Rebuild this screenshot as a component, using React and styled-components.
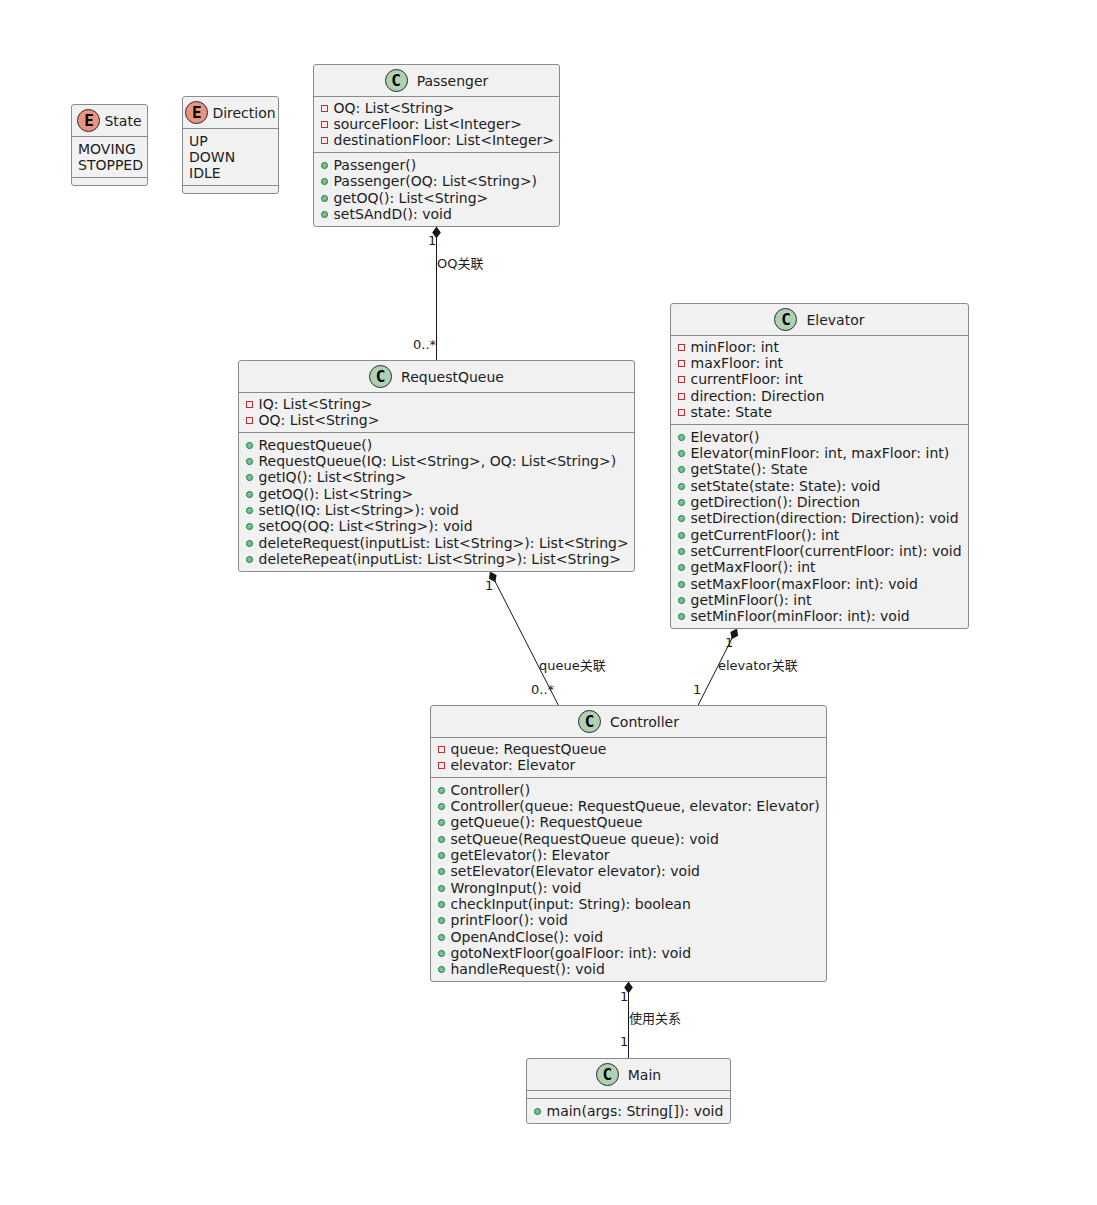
import React from 'react'
import styled, { createGlobalStyle } from 'styled-components'

const classes = [
  { name: 'State', kind: 'E', x: 71, y: 104, w: 77, gap: 4, attrs: [], plain: ['MOVING', 'STOPPED'], methods: [] },
  { name: 'Direction', kind: 'E', x: 182, y: 96, w: 97, gap: 4, attrs: [], plain: ['UP', 'DOWN', 'IDLE'], methods: [] },
  {
    name: 'Passenger', kind: 'C', x: 313, y: 64, w: 247,
    attrs: ['OQ: List<String>', 'sourceFloor: List<Integer>', 'destinationFloor: List<Integer>'],
    methods: ['Passenger()', 'Passenger(OQ: List<String>)', 'getOQ(): List<String>', 'setSAndD(): void'],
  },
  {
    name: 'RequestQueue', kind: 'C', x: 238, y: 360, w: 397,
    attrs: ['IQ: List<String>', 'OQ: List<String>'],
    methods: [
      'RequestQueue()',
      'RequestQueue(IQ: List<String>, OQ: List<String>)',
      'getIQ(): List<String>',
      'getOQ(): List<String>',
      'setIQ(IQ: List<String>): void',
      'setOQ(OQ: List<String>): void',
      'deleteRequest(inputList: List<String>): List<String>',
      'deleteRepeat(inputList: List<String>): List<String>',
    ],
  },
  {
    name: 'Elevator', kind: 'C', x: 670, y: 303, w: 299,
    attrs: ['minFloor: int', 'maxFloor: int', 'currentFloor: int', 'direction: Direction', 'state: State'],
    methods: [
      'Elevator()',
      'Elevator(minFloor: int, maxFloor: int)',
      'getState(): State',
      'setState(state: State): void',
      'getDirection(): Direction',
      'setDirection(direction: Direction): void',
      'getCurrentFloor(): int',
      'setCurrentFloor(currentFloor: int): void',
      'getMaxFloor(): int',
      'setMaxFloor(maxFloor: int): void',
      'getMinFloor(): int',
      'setMinFloor(minFloor: int): void',
    ],
  },
  {
    name: 'Controller', kind: 'C', x: 430, y: 705, w: 397,
    attrs: ['queue: RequestQueue', 'elevator: Elevator'],
    methods: [
      'Controller()',
      'Controller(queue: RequestQueue, elevator: Elevator)',
      'getQueue(): RequestQueue',
      'setQueue(RequestQueue queue): void',
      'getElevator(): Elevator',
      'setElevator(Elevator elevator): void',
      'WrongInput(): void',
      'checkInput(input: String): boolean',
      'printFloor(): void',
      'OpenAndClose(): void',
      'gotoNextFloor(goalFloor: int): void',
      'handleRequest(): void',
    ],
  },
  { name: 'Main', kind: 'C', x: 526, y: 1058, w: 205, attrs: [], methods: ['main(args: String[]): void'] },
]

const edges = [
  { from: [436.5, 226.5], to: [436.5, 360.5] },
  { from: [490, 571.5], to: [558.5, 705.5] },
  { from: [737, 628.5], to: [698, 705.5] },
  { from: [628.5, 981.5], to: [628.5, 1058.5] },
]

const labels = [
  { text: '1', x: 428, y: 233 },
  { text: 'OQ关联', x: 437, y: 256 },
  { text: '0..*', x: 413, y: 337 },
  { text: '1', x: 485, y: 578 },
  { text: 'queue关联', x: 539, y: 658 },
  { text: '0..*', x: 531, y: 682 },
  { text: '1', x: 725, y: 635 },
  { text: 'elevator关联', x: 718, y: 658 },
  { text: '1', x: 693, y: 682 },
  { text: '1', x: 620, y: 989 },
  { text: '使用关系', x: 629, y: 1011 },
  { text: '1', x: 620, y: 1034 },
]

const diamondPoints = ([x1, y1], [x2, y2]) => {
  const len = Math.hypot(x2 - x1, y2 - y1)
  const ux = (x2 - x1) / len
  const uy = (y2 - y1) / len
  const mid = [x1 + ux * 6, y1 + uy * 6]
  const end = [x1 + ux * 12, y1 + uy * 12]
  return [
    [x1, y1],
    [mid[0] - uy * 4.3, mid[1] + ux * 4.3],
    end,
    [mid[0] + uy * 4.3, mid[1] - ux * 4.3],
  ].map((p) => p.join(',')).join(' ')
}

const App = () => {
  return (
    <>
      <GlobalStyle />
      <Canvas>
        <Edges width="1097" height="1205" viewBox="0 0 1097 1205">
          {edges.map((e, i) => (
            <g key={i}>
              <line x1={e.from[0]} y1={e.from[1]} x2={e.to[0]} y2={e.to[1]} stroke="#181818" strokeWidth="1" />
              <polygon points={diamondPoints(e.from, e.to)} fill="#181818" />
            </g>
          ))}
        </Edges>
        {classes.map((c) => (
          <ClassBox key={c.name} $x={c.x} $y={c.y} $w={c.w}>
            <Header $gap={c.gap}>
              <Spot $kind={c.kind}>{c.kind}</Spot>
              <span>{c.name}</span>
            </Header>
            {c.plain ? (
              <MethodSection>
                {c.plain.map((p) => <PlainRow key={p}>{p}</PlainRow>)}
              </MethodSection>
            ) : c.attrs.length ? (
              <AttrSection>
                {c.attrs.map((a) => (
                  <Row key={a}><Private />{a}</Row>
                ))}
              </AttrSection>
            ) : (
              <EmptySection />
            )}
            {c.methods.length ? (
              <MethodSection>
                {c.methods.map((m) => (
                  <Row key={m}><Public />{m}</Row>
                ))}
              </MethodSection>
            ) : (
              <EmptySection />
            )}
          </ClassBox>
        ))}
        {labels.map((l, i) => (
          <EdgeLabel key={i} $x={l.x} $y={l.y}>{l.text}</EdgeLabel>
        ))}
      </Canvas>
    </>
  )
}

export default App

const GlobalStyle = createGlobalStyle`
  html, body {
    margin: 0;
    padding: 0;
    background: #ffffff;
  }
`
const Canvas = styled.div`
  position: relative;
  width: 1097px;
  height: 1205px;
  overflow: hidden;
  background: #ffffff;
  color: #1c1c1c;
  font-family: "DejaVu Sans", sans-serif;
`
const Edges = styled.svg`
  position: absolute;
  left: 0;
  top: 0;
`
const ClassBox = styled.div`
  position: absolute;
  left: ${(p) => p.$x}px;
  top: ${(p) => p.$y}px;
  width: ${(p) => p.$w}px;
  box-sizing: border-box;
  border: 1px solid #8b8b8b;
  border-radius: 3px;
  background: #f1f1f1;
`
const Header = styled.div`
  height: 31px;
  display: flex;
  align-items: center;
  justify-content: center;
  gap: ${(p) => p.$gap || 9}px;
  font-size: 14px;
  line-height: 16px;
`
const Spot = styled.span`
  width: 23px;
  height: 23px;
  box-sizing: border-box;
  flex: none;
  display: flex;
  align-items: center;
  justify-content: center;
  border: 1px solid #2a2a2a;
  border-radius: 50%;
  background: ${(p) => (p.$kind === 'E' ? '#eb937f' : '#add1b2')};
  color: #000000;
  font-family: "DejaVu Sans Mono", monospace;
  font-size: 16px;
  font-weight: 700;
`
const AttrSection = styled.div`
  padding: 2.8px 0 3.5px;
  border-top: 1px solid #8b8b8b;
`
const MethodSection = styled.div`
  padding: 3.8px 0 3.4px;
  border-top: 1px solid #8b8b8b;
`
const EmptySection = styled.div`
  height: 7px;
  border-top: 1px solid #8b8b8b;
`
const Row = styled.div`
  position: relative;
  height: 16.33px;
  padding-left: 19.5px;
  font-size: 14px;
  line-height: 16.33px;
  white-space: nowrap;
`
const PlainRow = styled(Row)`
  padding-left: 6px;
`
const Private = styled.i`
  position: absolute;
  left: 7px;
  top: 5px;
  width: 7px;
  height: 7px;
  box-sizing: border-box;
  border: 1px solid #c82930;
`
const Public = styled.i`
  position: absolute;
  left: 7px;
  top: 5px;
  width: 7px;
  height: 7px;
  box-sizing: border-box;
  border: 1px solid #038048;
  border-radius: 50%;
  background: #84be84;
`
const EdgeLabel = styled.div`
  position: absolute;
  left: ${(p) => p.$x}px;
  top: ${(p) => p.$y}px;
  font-family: "DejaVu Sans", "Noto Sans CJK SC", sans-serif;
  font-size: 13px;
  line-height: 16px;
  white-space: nowrap;
`
